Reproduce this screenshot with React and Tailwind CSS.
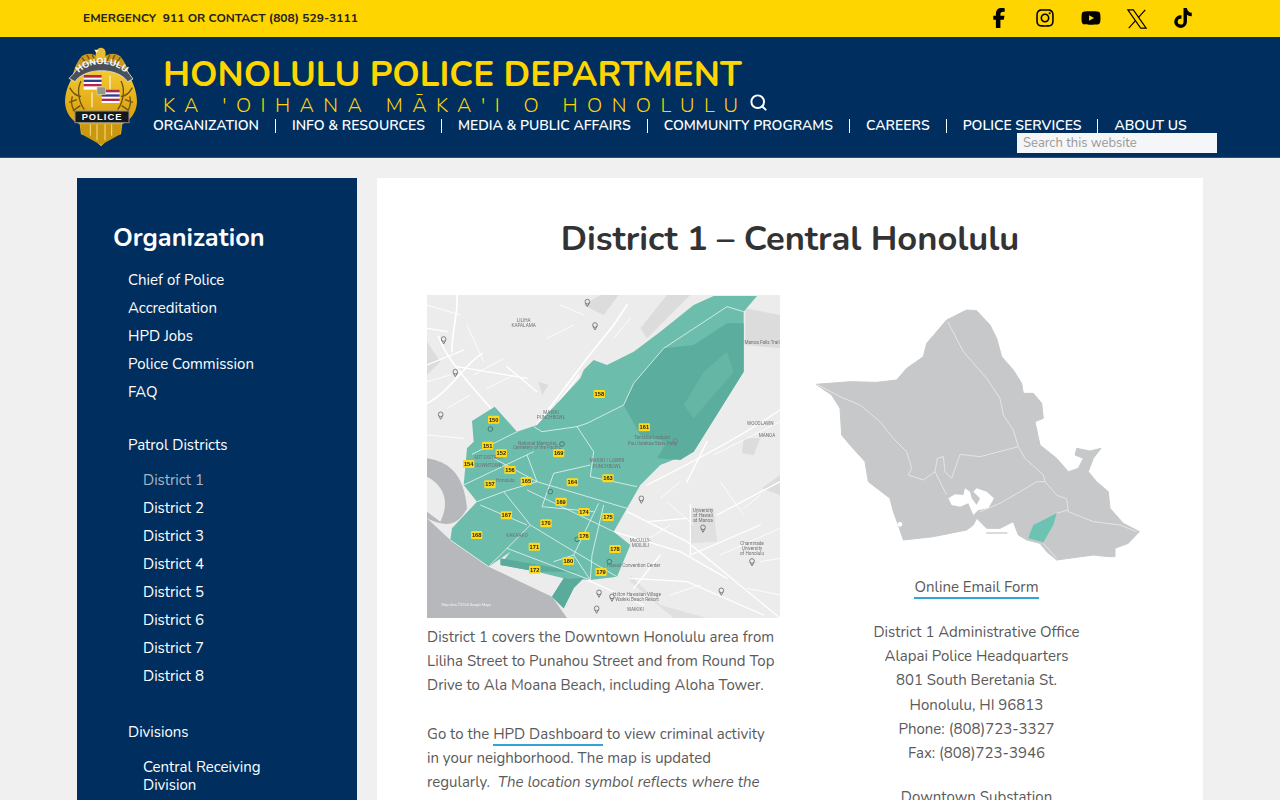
import { Search } from "lucide-react";
import { FaFacebookF, FaInstagram, FaYoutube, FaTiktok } from "react-icons/fa6";

const navItems = ["ORGANIZATION", "INFO & RESOURCES", "MEDIA & PUBLIC AFFAIRS", "COMMUNITY PROGRAMS", "CAREERS", "POLICE SERVICES", "ABOUT US"];
const topLinks = ["Chief of Police", "Accreditation", "HPD Jobs", "Police Commission", "FAQ"];
const districts = ["District 2", "District 3", "District 4", "District 5", "District 6", "District 7", "District 8"];

const beats = [
    [200, 374, "150"], [182, 452, "151"], [223, 475, "152"], [125, 507, "154"], [249, 525, "156"], [189, 568, "157"],
    [517, 297, "158"], [652, 397, "161"], [543, 550, "163"], [436, 562, "164"], [298, 558, "165"], [238, 661, "167"],
    [149, 720, "168"], [395, 475, "169"], [402, 620, "169"], [357, 685, "170"], [322, 755, "171"], [323, 824, "172"],
    [471, 651, "174"], [543, 666, "175"], [471, 723, "176"], [564, 762, "178"], [522, 831, "179"], [424, 798, "180"],
];

const pins = [[481, 20], [504, 90], [50, 132], [41, 358], [745, 438], [643, 610], [828, 697], [975, 798], [883, 886], [516, 892], [555, 904], [509, 940], [85, 230]];

const mapLabels = [
    [290, 82, "LILIHA"], [290, 97, "KAPALAMA"], [372, 358, "MAKIKI"], [372, 373, "PUNCHBOWL"], [1000, 390, "WOODLAWN"],
    [1020, 425, "MANOA"], [1005, 148, "Manoa Falls Trail"], [640, 740, "McCULLY-"], [640, 757, "MOILIILI"], [828, 650, "University"],
    [828, 665, "of Hawaii"], [828, 680, "at Manoa"], [975, 750, "Chaminade"], [975, 765, "University"], [975, 780, "of Honolulu"],
    [620, 815, "Hawaii Convention Center"], [630, 903, "Hilton Hawaiian Village"], [630, 917, "Waikiki Beach Resort"], [625, 947, "WAIKIKI"],
    [540, 500, "MAKIKI / LOWER"], [540, 520, "PUNCHBOWL"], [185, 492, "ART DISTRICT"], [185, 515, "DOWNTOWN"], [235, 560, "Honolulu"],
    [675, 432, "Tantalus Lookout"], [675, 449, "Puu Ualakaa State Park"], [270, 725, "KAKA'AKO"], [330, 450, "National Memorial"], [330, 463, "Cemetery of the Pacific"],
];

function PoliceBadge() {
    return (
        <svg viewBox="0 0 240 330" className="w-[80px] h-[110px] block">
            <defs>
                <linearGradient id="gold" x1="0" y1="0" x2="0" y2="1">
                    <stop offset="0" stopColor="#f3c932" />
                    <stop offset="0.55" stopColor="#dda512" />
                    <stop offset="1" stopColor="#f6cb1e" />
                </linearGradient>
                <path id="scroll" d="M42 116 C72 62 172 62 204 116" />
            </defs>
            {/* wings */}
            <path d="M120 60 C98 42 78 40 62 52 C48 68 40 88 34 112 L120 92 L206 112 C200 88 192 68 178 52 C162 40 142 42 120 60Z" fill="#c9981f" />
            <path d="M62 55 L80 78 M78 48 L92 74 M94 48 L104 70 M178 55 L160 78 M162 48 L148 74 M146 48 L136 70" stroke="#6f5410" strokeWidth="4" />
            <path d="M106 60 C100 38 110 24 124 27 C138 31 134 50 132 62Z" fill="#e8bd33" />
            <path d="M100 32 L113 33 L106 42Z" fill="#fff6cc" />
            {/* shield */}
            <path d="M38 108 C22 135 12 160 12 190 C14 222 30 244 56 256 L60 286 L88 292 L120 322 L152 292 L180 286 L184 256 C208 244 226 222 228 190 C228 160 218 135 204 108 C170 92 72 92 38 108Z" fill="url(#gold)" />
            <path d="M34 172 C26 200 40 226 64 236 M206 172 C214 200 200 226 176 236 M26 146 C36 164 50 172 60 172 M214 146 C204 164 190 172 180 172 M60 126 C46 152 54 190 70 212 M180 126 C194 152 186 190 170 212 M24 190 L48 182 M216 190 L192 182 M36 215 L58 200 M204 215 L182 200" fill="none" stroke="#6f5410" strokeWidth="4" />
            <path d="M58 256 H182 L178 286 L120 318 L62 286Z" fill="#c99710" />
            <path d="M88 256 V290 M108 256 V304 M132 256 V304 M152 256 V290" stroke="#f8df7a" strokeWidth="3" />
            {/* scroll */}
            <path d="M24 118 L36 106 C68 54 172 54 206 106 L216 120 L200 128 C170 84 72 84 42 128Z" fill="#4a5059" stroke="#e8e8e8" strokeWidth="2.5" />
            <text fontSize="27" fontWeight="800" fill="#fff" fontFamily="Liberation Sans, sans-serif">
                <textPath href="#scroll" startOffset="50%" textAnchor="middle">HONOLULU</textPath>
            </text>
            {/* flags */}
            <g>
                <rect x="68" y="108" width="54" height="44" fill="#fff" />
                <rect x="68" y="108" width="54" height="8" fill="#b6264a" />
                <rect x="68" y="122" width="54" height="7" fill="#2f3f8f" />
                <rect x="68" y="135" width="54" height="7" fill="#b6264a" />
                <rect x="122" y="152" width="54" height="40" fill="#fff" />
                <rect x="122" y="152" width="54" height="8" fill="#b6264a" />
                <rect x="122" y="166" width="54" height="7" fill="#2f3f8f" />
                <rect x="122" y="179" width="54" height="7" fill="#b6264a" />
            </g>
            <rect x="108" y="144" width="26" height="22" fill="#8f9a8c" stroke="#d8d2a8" strokeWidth="2" />
            <path d="M147 150 V110 M93 205 V160" stroke="#fff" strokeWidth="3" />
            {/* police plate */}
            <rect x="42" y="216" width="162" height="35" fill="#17191c" stroke="#8d9089" strokeWidth="3" />
            <text x="123" y="243" textAnchor="middle" fontSize="28" fontWeight="800" fill="#fff" fontFamily="Liberation Sans, sans-serif" letterSpacing="3">POLICE</text>
        </svg>
    );
}

function DistrictMap() {
    return (
        <svg viewBox="0 0 1059 969" className="w-[353px] h-[323px] block bg-[#ececec] blur-[0.4px]">
            {/* water */}
            <path d="M0 490 C60 500 110 530 120 640 C95 690 60 700 0 670Z" fill="#b7b8bb" />
            <path d="M0 670 L70 735 L185 815 L375 905 L420 969 L0 969Z" fill="#b7b8bb" />
            <path d="M0 545 C50 570 70 620 40 680 L0 650Z" fill="#ececec" />
            <path d="M640 100 L720 0 L790 0 L660 130Z M955 40 L1059 60 L1059 160 L955 150Z M950 430 L1000 430 L980 480 L945 475Z M1005 580 L1059 540 L1059 600Z M0 140 L40 200 L0 240Z M470 30 L520 0 L575 0 L530 60Z M335 260 L365 270 L345 300Z" fill="#dcdcdd" />
            <path d="M790 640 L860 640 L870 740 L790 745Z M610 840 L700 930 L840 969 L740 969 L610 860Z" fill="#e0e0e1" />
            {/* roads outside the district */}
            <g fill="none" stroke="#fff" strokeLinecap="round">
                <path d="M0 325 C70 290 110 210 165 175 M35 125 C60 200 150 290 200 350 M90 0 C95 50 75 100 75 170 M330 390 L480 190 L560 90 L600 30" strokeWidth="5" />
                <path d="M0 100 L60 110 M0 210 L110 165 M90 215 L300 250 M240 215 L330 290 M395 320 L455 240 M600 650 L780 740 L1059 969 M560 710 L760 770 L900 850 M660 570 C800 500 950 420 1059 345 M790 630 V780 L1000 690 M660 680 L780 670 M870 660 L1059 560 M700 780 L620 880 M610 850 L780 860 L1010 960 M470 850 L650 930 M840 440 L780 560" strokeWidth="4" />
                <path d="M0 30 L100 60 M170 200 L120 90 M0 260 L70 240 M860 480 L1059 380 M880 780 L1059 700 M960 880 L1059 900 M140 240 L230 190 M60 340 L130 300 M180 280 L260 240 M700 610 L760 560 M650 740 L730 690 M880 560 L950 660 M950 640 L1000 600 M1000 800 L1059 790 M730 900 L820 870 M0 420 L110 430 M360 130 L440 90 M400 30 L470 60 M560 130 L610 70 M720 620 L800 690" strokeWidth="2.5" />
            </g>
            {/* district */}
            <path d="M135 378 L203 335 L270 410 L330 390 L460 250 L470 225 L500 195 L540 210 L620 170 L700 110 L800 30 L860 3 L990 3 L950 50 L950 230 L800 470 L700 510 L640 570 L600 640 L560 710 L610 750 L570 845 L490 855 L420 850 L440 880 L410 940 L375 905 L410 850 L330 830 L220 810 L250 770 L185 815 L70 735 L75 700 L150 620 L110 570 L120 460 L140 440Z" fill="#6cbdac" />
            <path d="M950 85 L950 230 L800 470 L760 495 L690 490 L720 440 L640 420 L590 330 L620 265 L710 160 L800 150 L900 85Z" fill="#5bad9d" />
            <path d="M830 230 L900 170 L920 230 L860 300 L800 370 L770 330Z" fill="#66b6a6" />
            <path d="M375 905 L410 850 L470 850 L440 880 L410 940Z M220 790 L280 800 L450 830 L330 830 L220 810Z" fill="#5aab9b" />
            {/* beat lines */}
            <g fill="none" stroke="#e4f3ef" strokeWidth="2.5" strokeLinejoin="round">
                <path d="M950 50 L900 35 L710 160 L620 265 L590 330 L480 385 L450 395 L500 470 L490 545 L630 575" />
                <path d="M320 395 L345 410 L450 395" />
                <path d="M135 478 L270 410 M110 570 L320 470 M200 490 L330 560 L600 640 M300 480 L330 560 L230 590 L150 620" />
                <path d="M230 590 L310 690 L240 760 L185 815 M310 690 L400 745 L570 845 M160 630 L300 690" />
                <path d="M300 585 L560 710 M345 635 L500 650 M380 535 L345 635 M490 510 L380 535 M515 625 L440 780 L380 800 M530 630 L495 780 L490 855 M440 780 L490 855 M240 760 L490 855" />
                <path d="M70 735 L185 815" />
            </g>
            {/* small map text */}
            <g fontFamily="Roboto, sans-serif" fontSize="14" fill="#6d7174" textAnchor="middle">
                {mapLabels.map(([x, y, t]) => (
                    <text key={`${t}${y}`} x={x} y={y}>{t}</text>
                ))}
            </g>
            <text x="118" y="933" fontFamily="Roboto, sans-serif" fontSize="11" fill="#f2f2f2" textAnchor="middle">Map data ©2024 Google Maps</text>
            {/* pins */}
            {pins.map(([x, y]) => (
                <g key={`${x}-${y}`} fill="none" stroke="#7d8184" strokeWidth="3">
                    <circle cx={x} cy={y} r="7" />
                    <path d={`M${x - 6} ${y + 4} L${x} ${y + 15} L${x + 6} ${y + 4}`} />
                </g>
            ))}
            <g fill="none" stroke="#3f7f73" strokeWidth="3">
                <circle cx="190" cy="402" r="7" />
                <circle cx="405" cy="447" r="7" />
                <circle cx="370" cy="590" r="7" />
                <circle cx="450" cy="733" r="7" />
                <circle cx="547" cy="800" r="7" />
            </g>
            {/* beat numbers */}
            {beats.map(([x, y, n]) => (
                <g key={`${n}-${x}`}>
                    <rect x={x - 17} y={y - 12} width="34" height="24" rx="3" fill="#ffd91a" />
                    <text x={x} y={y + 6} textAnchor="middle" fontSize="17" fontWeight="700" fill="#222" fontFamily="Liberation Sans, sans-serif">{n}</text>
                </g>
            ))}
        </svg>
    );
}

function OahuMap() {
    return (
        <svg viewBox="0 0 1059 840" className="w-[353px] h-[280px] block blur-[0.3px]">
            <path d="M48 268 L150 260 L230 262 L290 255 L320 220 L370 185 L380 145 L440 75 L500 45 L530 47 L570 90 L590 130 L605 185 L640 225 L665 265 L670 295 L700 295 L725 325 L730 370 L705 380 L720 450 L770 490 L805 530 L835 520 L850 490 L825 480 L830 460 L870 468 L903 460 L880 490 L865 530 L890 560 L925 590 L930 640 L970 685 L1018 710 L985 745 L945 760 L945 785 L925 785 L880 780 L770 795 L740 770 L720 745 L680 735 L655 720 L640 680 L600 700 L560 700 L530 670 L520 690 L500 705 L400 725 L310 735 L295 690 L280 650 L270 610 L205 560 L195 500 L150 450 L125 420 L120 340 L95 300Z" fill="#c6c8ca" stroke="#c6c8ca" strokeWidth="3" strokeLinejoin="round" />
            {/* Pearl Harbor */}
            <path d="M445 610 L465 598 L490 600 L495 580 L510 590 L515 610 L530 630 L540 610 L520 590 L530 580 L560 590 L582 610 L565 640 L535 645 L520 660 L505 625 L480 635 L455 630Z" fill="#fff" />
            <path d="M558 714 H622" stroke="#b5b7b9" strokeWidth="3" />
            <circle cx="300" cy="688" r="7" fill="#fff" />
            {/* zone lines */}
            <g fill="none" stroke="#e9eaeb" strokeWidth="2.5" strokeLinejoin="round">
                <path d="M443 80 L490 170 L560 250 L600 310 L610 360 L640 405 L655 455 L675 490 L730 540 L735 560 L770 600 L800 612 L805 650 L880 680 L960 690 L1010 710" />
                <path d="M50 268 L120 305 L180 330 L240 380 L280 430 L320 470 L335 520 L325 540 L370 555 L405 530 L412 490 L430 485 L435 530 L455 550 L480 478 L540 485 L655 455" />
                <path d="M405 530 L440 600 M540 650 L600 625 L660 590 L710 560 L735 560" />
                <path d="M805 645 L770 655 M730 745 L770 790" />
            </g>
            <path d="M690 715 L700 690 L770 655 L760 690 L730 742 L685 730Z" fill="#6cc3b1" />
        </svg>
    );
}

function App() {
    return (
        <div className="h-[800px] overflow-hidden bg-[#f0f0f0] text-[15px] text-[#5a5a5a] font-['Nunito','Lato',sans-serif]">
            {/* Top bar */}
            <div className="h-[37px] bg-[#ffd500] flex items-center justify-between pl-[83px] pr-[74px]">
                <p className="text-[12px] leading-[16px] font-bold text-[#222] whitespace-pre -mt-[1px]">EMERGENCY  911 OR CONTACT (808) 529-3111</p>
                <div className="flex text-black">
                    <a className="w-[46px] flex justify-center"><FaFacebookF size={20} /></a>
                    <a className="w-[46px] flex justify-center"><FaInstagram size={20} /></a>
                    <a className="w-[46px] flex justify-center"><FaYoutube size={20} /></a>
                    <a className="w-[46px] flex justify-center">
                        <svg viewBox="0 0 24 24" className="w-[22px] h-[22px]" fill="none" stroke="currentColor" strokeWidth="1.3">
                            <path d="M2 2 H8 L22 22 H16 Z" />
                            <path d="M21 2 L13.4 10.4 M10.6 13.6 L3 22" />
                        </svg>
                    </a>
                    <a className="w-[46px] flex justify-center"><FaTiktok size={20} /></a>
                </div>
            </div>

            {/* Header */}
            <header className="relative h-[121px] bg-[#002f5f] border-b border-[#2b4f7c] flex pl-[61px] pt-[2px]">
                <PoliceBadge />
                <div className="ml-[22px] pt-[16px]">
                    <h1 className="text-[35px] leading-[40px] font-bold text-[#ffd500] whitespace-nowrap">HONOLULU POLICE DEPARTMENT</h1>
                    <div className="flex items-center h-[24px] -mt-[1px]">
                        <p className="text-[20px] font-light tracking-[9.43px] text-[#ffd500] whitespace-nowrap">KA 'OIHANA MĀKA'I O HONOLULU</p>
                        <Search size={19} strokeWidth={2.5} className="text-white ml-[2px] -mt-[7px]" />
                    </div>
                    <nav className="flex -ml-[10px] -mt-[2px] h-[20px] items-center">
                        {navItems.map((item, i) => (
                            <a
                                key={item}
                                className={`text-[14px] leading-[14px] font-semibold text-white whitespace-nowrap ${i === 0 ? "pr-[16px]" : "px-[16px]"} ${i < navItems.length - 1 ? "border-r border-white" : ""}`}
                            >
                                {item}
                            </a>
                        ))}
                    </nav>
                </div>
                <input
                    placeholder="Search this website"
                    className="absolute left-[1017px] top-[96px] w-[200px] h-[20px] px-[6px] bg-[#f5f6f8] text-[13px] placeholder:text-[#999] outline-none"
                />
            </header>

            {/* Body */}
            <div className="flex gap-[20px] pl-[77px] pt-[20px]">
                <aside className="w-[280px] h-[700px] shrink-0 bg-[#002f5f] text-white pl-[36px] pt-[43px]">
                    <h2 className="text-[25.3px] leading-[34px] font-bold">Organization</h2>
                    <ul className="pl-[15px] mt-[11px]">
                        {topLinks.map((item) => (
                            <li key={item} className="h-[28px] leading-[28px]">{item}</li>
                        ))}
                        <li className="h-[28px] leading-[28px] mt-[25px]">Patrol Districts</li>
                    </ul>
                    <ul className="pl-[30px] mt-[7px]">
                        <li className="h-[28px] leading-[28px] text-[#a9b6c6]">District 1</li>
                        {districts.map((item) => (
                            <li key={item} className="h-[28px] leading-[28px]">{item}</li>
                        ))}
                    </ul>
                    <p className="pl-[15px] mt-[28px] h-[28px] leading-[28px]">Divisions</p>
                    <p className="pl-[30px] mt-[12px] leading-[18px]">Central Receiving<br />Division</p>
                </aside>

                <main className="w-[826px] h-[700px] shrink-0 bg-white px-[50px] pt-[37px]">
                    <h1 className="text-[34.5px] leading-[46px] font-bold text-[#333] text-center mt-[1px]">District 1 – Central Honolulu</h1>
                    <div className="flex gap-[20px] mt-[33px]">
                        <div className="w-[353px]">
                            <DistrictMap />
                            <p className="mt-[7px] leading-[24px] whitespace-nowrap">
                                District 1 covers the Downtown Honolulu area from<br />
                                Liliha Street to Punahou Street and from Round Top<br />
                                Drive to Ala Moana Beach, including Aloha Tower.
                            </p>
                            <p className="mt-[25px] leading-[24px] whitespace-nowrap">
                                Go to the <a className="border-b-2 border-[#33a3dc]">HPD Dashboard</a> to view criminal activity<br />
                                in your neighborhood. The map is updated<br />
                                regularly.&nbsp; <em>The location symbol reflects where the</em>
                            </p>
                        </div>
                        <div className="w-[353px] text-center">
                            <OahuMap />
                            <p className="leading-[24px]"><a className="border-b-2 border-[#33a3dc]">Online Email Form</a></p>
                            <p className="mt-[21px] leading-[24.2px]">
                                District 1 Administrative Office<br />
                                Alapai Police Headquarters<br />
                                801 South Beretania St.<br />
                                Honolulu, HI 96813<br />
                                Phone: (808)723-3327<br />
                                Fax: (808)723-3946
                            </p>
                            <p className="mt-[20px] leading-[24px]">Downtown Substation</p>
                        </div>
                    </div>
                </main>
            </div>
        </div>
    );
}

export default App;
